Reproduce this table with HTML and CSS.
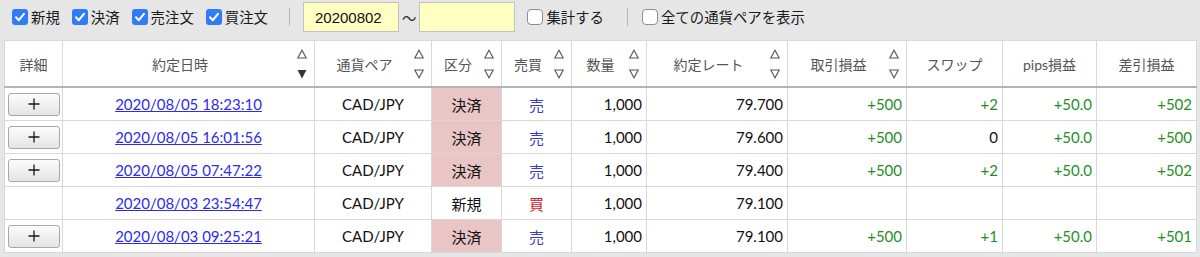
FILE: index.html
```html
<!DOCTYPE html>
<html lang="ja">
<head>
<meta charset="utf-8">
<title>約定一覧</title>
<link rel="stylesheet" href="styles.css">
</head>
<body>
<div class="toolbar">
  <label class="cb"><span class="box on"><svg viewBox="0 0 16 16" width="16" height="16"><path d="M4 8.3 L6.8 11.2 L12 4.8" fill="none" stroke="#fff" stroke-width="2" stroke-linecap="round" stroke-linejoin="round"/></svg></span>新規</label>
  <label class="cb"><span class="box on"><svg viewBox="0 0 16 16" width="16" height="16"><path d="M4 8.3 L6.8 11.2 L12 4.8" fill="none" stroke="#fff" stroke-width="2" stroke-linecap="round" stroke-linejoin="round"/></svg></span>決済</label>
  <label class="cb"><span class="box on"><svg viewBox="0 0 16 16" width="16" height="16"><path d="M4 8.3 L6.8 11.2 L12 4.8" fill="none" stroke="#fff" stroke-width="2" stroke-linecap="round" stroke-linejoin="round"/></svg></span>売注文</label>
  <label class="cb"><span class="box on"><svg viewBox="0 0 16 16" width="16" height="16"><path d="M4 8.3 L6.8 11.2 L12 4.8" fill="none" stroke="#fff" stroke-width="2" stroke-linecap="round" stroke-linejoin="round"/></svg></span>買注文</label>
  <span class="sep"></span>
  <input class="date" type="text" value="20200802">
  <span class="tilde">〜</span>
  <input class="date" type="text" value="">
  <label class="cb cb-sum"><span class="box off"></span>集計する</label>
  <span class="sep sep2"></span>
  <label class="cb"><span class="box off"></span>全ての通貨ペアを表示</label>
</div>

<table class="grid">
  <colgroup>
    <col class="w-detail"><col class="w-date"><col class="w-pair"><col class="w-kind"><col class="w-side"><col class="w-qty"><col class="w-rate"><col class="w-pl"><col class="w-swap"><col class="w-pips"><col class="w-net">
  </colgroup>
  <thead>
    <tr>
      <th><span class="ht">詳細</span></th>
      <th><div class="hc"><span class="ht">約定日時</span><span class="sort"><svg width="10" height="10" viewBox="0 0 10 10"><path d="M5 1.2 L9.2 9 H0.8 Z" fill="none" stroke="#555" stroke-width="1.1"/></svg><svg width="10" height="10" viewBox="0 0 10 10"><path d="M0.6 1 H9.4 L5 9.5 Z" fill="#333"/></svg></span></div></th>
      <th><div class="hc"><span class="ht">通貨ペア</span><span class="sort"><svg width="10" height="10" viewBox="0 0 10 10"><path d="M5 1.2 L9.2 9 H0.8 Z" fill="none" stroke="#555" stroke-width="1.1"/></svg><svg width="10" height="10" viewBox="0 0 10 10"><path d="M0.8 1 H9.2 L5 8.8 Z" fill="none" stroke="#555" stroke-width="1.1"/></svg></span></div></th>
      <th><div class="hc"><span class="ht">区分</span><span class="sort"><svg width="10" height="10" viewBox="0 0 10 10"><path d="M5 1.2 L9.2 9 H0.8 Z" fill="none" stroke="#555" stroke-width="1.1"/></svg><svg width="10" height="10" viewBox="0 0 10 10"><path d="M0.8 1 H9.2 L5 8.8 Z" fill="none" stroke="#555" stroke-width="1.1"/></svg></span></div></th>
      <th><div class="hc"><span class="ht">売買</span><span class="sort"><svg width="10" height="10" viewBox="0 0 10 10"><path d="M5 1.2 L9.2 9 H0.8 Z" fill="none" stroke="#555" stroke-width="1.1"/></svg><svg width="10" height="10" viewBox="0 0 10 10"><path d="M0.8 1 H9.2 L5 8.8 Z" fill="none" stroke="#555" stroke-width="1.1"/></svg></span></div></th>
      <th><div class="hc"><span class="ht">数量</span><span class="sort"><svg width="10" height="10" viewBox="0 0 10 10"><path d="M5 1.2 L9.2 9 H0.8 Z" fill="none" stroke="#555" stroke-width="1.1"/></svg><svg width="10" height="10" viewBox="0 0 10 10"><path d="M0.8 1 H9.2 L5 8.8 Z" fill="none" stroke="#555" stroke-width="1.1"/></svg></span></div></th>
      <th><div class="hc"><span class="ht">約定レート</span><span class="sort"><svg width="10" height="10" viewBox="0 0 10 10"><path d="M5 1.2 L9.2 9 H0.8 Z" fill="none" stroke="#555" stroke-width="1.1"/></svg><svg width="10" height="10" viewBox="0 0 10 10"><path d="M0.8 1 H9.2 L5 8.8 Z" fill="none" stroke="#555" stroke-width="1.1"/></svg></span></div></th>
      <th><div class="hc"><span class="ht">取引損益</span><span class="sort"><svg width="10" height="10" viewBox="0 0 10 10"><path d="M5 1.2 L9.2 9 H0.8 Z" fill="none" stroke="#555" stroke-width="1.1"/></svg><svg width="10" height="10" viewBox="0 0 10 10"><path d="M0.8 1 H9.2 L5 8.8 Z" fill="none" stroke="#555" stroke-width="1.1"/></svg></span></div></th>
      <th><span class="ht">スワップ</span></th>
      <th><span class="ht">pips損益</span></th>
      <th><span class="ht">差引損益</span></th>
    </tr>
  </thead>
  <tbody>
    <tr>
      <td class="c"><button class="plus" aria-label="詳細"><svg width="12" height="12" viewBox="0 0 12 12"><path d="M6 0.5 V11.5 M0.5 6 H11.5" stroke="#1a1a1a" stroke-width="1.3"/></svg></button></td>
      <td class="c"><a href="#">2020/08/05 18:23:10</a></td>
      <td class="c">CAD/JPY</td>
      <td class="c settle">決済</td>
      <td class="c sell">売</td>
      <td class="r">1,000</td>
      <td class="r">79.700</td>
      <td class="r pos">+500</td>
      <td class="r pos">+2</td>
      <td class="r pos">+50.0</td>
      <td class="r pos">+502</td>
    </tr>
    <tr>
      <td class="c"><button class="plus" aria-label="詳細"><svg width="12" height="12" viewBox="0 0 12 12"><path d="M6 0.5 V11.5 M0.5 6 H11.5" stroke="#1a1a1a" stroke-width="1.3"/></svg></button></td>
      <td class="c"><a href="#">2020/08/05 16:01:56</a></td>
      <td class="c">CAD/JPY</td>
      <td class="c settle">決済</td>
      <td class="c sell">売</td>
      <td class="r">1,000</td>
      <td class="r">79.600</td>
      <td class="r pos">+500</td>
      <td class="r">0</td>
      <td class="r pos">+50.0</td>
      <td class="r pos">+500</td>
    </tr>
    <tr>
      <td class="c"><button class="plus" aria-label="詳細"><svg width="12" height="12" viewBox="0 0 12 12"><path d="M6 0.5 V11.5 M0.5 6 H11.5" stroke="#1a1a1a" stroke-width="1.3"/></svg></button></td>
      <td class="c"><a href="#">2020/08/05 07:47:22</a></td>
      <td class="c">CAD/JPY</td>
      <td class="c settle">決済</td>
      <td class="c sell">売</td>
      <td class="r">1,000</td>
      <td class="r">79.400</td>
      <td class="r pos">+500</td>
      <td class="r pos">+2</td>
      <td class="r pos">+50.0</td>
      <td class="r pos">+502</td>
    </tr>
    <tr>
      <td class="c"></td>
      <td class="c"><a href="#">2020/08/03 23:54:47</a></td>
      <td class="c">CAD/JPY</td>
      <td class="c">新規</td>
      <td class="c buy">買</td>
      <td class="r">1,000</td>
      <td class="r">79.100</td>
      <td class="r"></td>
      <td class="r"></td>
      <td class="r"></td>
      <td class="r"></td>
    </tr>
    <tr>
      <td class="c"><button class="plus" aria-label="詳細"><svg width="12" height="12" viewBox="0 0 12 12"><path d="M6 0.5 V11.5 M0.5 6 H11.5" stroke="#1a1a1a" stroke-width="1.3"/></svg></button></td>
      <td class="c"><a href="#">2020/08/03 09:25:21</a></td>
      <td class="c">CAD/JPY</td>
      <td class="c settle">決済</td>
      <td class="c sell">売</td>
      <td class="r">1,000</td>
      <td class="r">79.100</td>
      <td class="r pos">+500</td>
      <td class="r pos">+1</td>
      <td class="r pos">+50.0</td>
      <td class="r pos">+501</td>
    </tr>
  </tbody>
</table>
</body>
</html>
```
FILE: styles.css
```css
html, body {
  margin: 0;
  padding: 0;
}
body {
  background: #e6e6e6;
  font-family: Lato, "Noto Sans CJK JP", sans-serif;
  color: #111;
  width: 1200px;
  height: 257px;
  overflow: hidden;
}

/* toolbar */
.toolbar {
  display: flex;
  align-items: center;
  height: 34px;
  padding-left: 12px;
  font-family: "Noto Sans CJK JP", sans-serif;
}
.cb {
  display: flex;
  align-items: center;
  font-size: 14.4px;
  line-height: 18px;
  color: #1a1a1a;
  margin-right: 12px;
}
.box {
  width: 16px;
  height: 16px;
  border-radius: 3px;
  box-sizing: border-box;
  margin-right: 3px;
  display: block;
  flex: none;
}
.box svg { display: block; }
.box.on {
  background: #2f7cf6;
}
.box.off {
  background: #fff;
  border: 1px solid #8e8e8e;
  border-radius: 4px;
}
.sep {
  width: 1px;
  height: 18px;
  background: #b8b8b8;
  margin-left: 9px;
  margin-right: 13px;
}
.sep2 {
  margin-left: 11px;
  margin-right: 14px;
}
.date {
  width: 96px;
  height: 30px;
  box-sizing: border-box;
  border: 1px solid #c2c2c2;
  background: #ffffc2;
  font-family: "Liberation Sans", Arial, sans-serif;
  font-size: 15px;
  color: #111;
  padding: 0 0 0 11px;
  margin: 0;
  outline: none;
}
.tilde {
  font-size: 14.4px;
  color: #333;
  margin: 0 3px 0 3px;
}
.cb-sum {
  margin-left: 12px;
}

/* table */
.grid {
  margin: 6px 0 0 4px;
  border-collapse: collapse;
  table-layout: fixed;
  width: 1192px;
  background: #fff;
}
.w-detail { width: 58px; }
.w-date { width: 252px; }
.w-pair { width: 117px; }
.w-kind { width: 70px; }
.w-side { width: 70px; }
.w-qty { width: 75px; }
.w-rate { width: 141px; }
.w-pl { width: 119px; }
.w-swap { width: 96px; }
.w-pips { width: 94px; }
.w-net { width: 100px; }

.grid th, .grid td {
  border: 1px solid #d8d8d8;
  padding: 0;
}
.grid th {
  height: 45px;
  border-bottom: 2px solid #b4b4b4;
  font-weight: normal;
  font-size: 14px;
  color: #555;
  text-align: center;
  vertical-align: middle;
}
.hc {
  display: flex;
  align-items: center;
}
.ht {
  flex: 1;
  text-align: center;
}
.sort {
  display: flex;
  flex-direction: column;
  gap: 10px;
  margin-right: 7px;
  width: 10px;
}
.sort svg { display: block; }

.grid td {
  height: 32px;
  font-size: 15px;
  color: #111;
  vertical-align: middle;
  white-space: nowrap;
}
.c { text-align: center; }
.r { text-align: right; padding-right: 4px !important; }
.grid a {
  color: #2b2bf2;
  text-decoration: underline;
}
.settle { background: #eac5c5; }
.sell { color: #3b3bc4 !important; }
.buy { color: #d21c2c !important; }
.pos { color: #1f8f1f !important; }

.plus {
  width: 52px;
  height: 23px;
  display: flex;
  align-items: center;
  justify-content: center;
  margin: 0 auto;
  border: 1px solid #a8a8a8;
  border-radius: 3px;
  background: linear-gradient(#fcfcfc, #e4e4e4);
  padding: 0;
}
.plus svg { display: block; }
```
